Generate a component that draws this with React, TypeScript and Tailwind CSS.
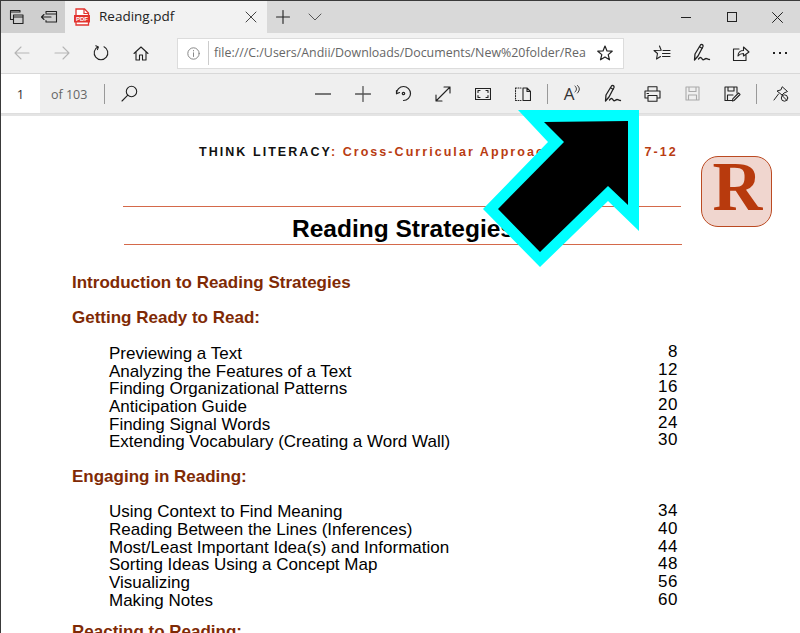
import React from "react";

const S = ({ w = 20, h = 20, vb = "0 0 20 20", c = "#222", sw = 1.3, children }: any) => (
  <svg width={w} height={h} viewBox={vb} fill="none" stroke={c} strokeWidth={sw} strokeLinecap="round" strokeLinejoin="round">{children}</svg>
);

const Sig = ({ c = "#222" }: { c?: string }) => (
  <S c={c}>
    <path d="M3.5 17 L4 11 L9.5 2 C10.5 0.8 12.5 1.8 12 3.5 L7 13 L3.5 17 Z" />
    <path d="M8.5 3.8 L11 5.2" />
    <path d="M7.5 16 C9.5 13.5 10.5 14.5 11.5 16.5 C12.5 17.5 14 15.5 15 15.5 C16 15.5 17 16.5 18.5 16.5" />
  </S>
);

const Icon = ({ w = 40, children }: any) => (
  <div className="flex items-center justify-center shrink-0" style={{ width: w }}>{children}</div>
);

const toc1: [string, string][] = [
  ["Previewing a Text", "8"],
  ["Analyzing the Features of a Text", "12"],
  ["Finding Organizational Patterns", "16"],
  ["Anticipation Guide", "20"],
  ["Finding Signal Words", "24"],
  ["Extending Vocabulary (Creating a Word Wall)", "30"],
];
const toc2: [string, string][] = [
  ["Using Context to Find Meaning", "34"],
  ["Reading Between the Lines (Inferences)", "40"],
  ["Most/Least Important Idea(s) and Information", "44"],
  ["Sorting Ideas Using a Concept Map", "48"],
  ["Visualizing", "56"],
  ["Making Notes", "60"],
];

const Toc = ({ rows, numCls }: { rows: [string, string][]; numCls: string }) => (
  <div className="pl-[37px] pr-[122px] text-[17px] leading-[17.6px] text-black">
    {rows.map(([a, b]) => (
      <div key={a} className="flex justify-between h-[17.65px]">
        <span>{a}</span>
        <span className={`tracking-[0.6px] ${numCls}`}>{b}</span>
      </div>
    ))}
  </div>
);

const Heading = ({ children, cls }: any) => (
  <div className={`text-[17px] leading-[20px] font-bold text-[#7f2a05] ${cls}`}>{children}</div>
);

export default function App() {
  return (
    <div className="relative w-[800px] h-[633px] overflow-hidden bg-white font-['Open_Sans','Noto_Sans',sans-serif] border-t border-l border-[#3a3a3a] flex flex-col">
      {/* Tab strip */}
      <div className="flex h-[32px] shrink-0 bg-[#d9d9d9] items-stretch">
        <div className="flex w-[64px] bg-[#cfcfcf] shrink-0">
          <Icon w={32}>
            <S w={16} h={16} vb="0 0 16 16" sw={1.1}>
              <path d="M1.5 3 V1.5 H11 V3 M1.5 3 H11 M1.5 3 V10.5 H4.5" />
              <path d="M4.5 6 H14 V14.5 H4.5 V6 Z M4.5 8 H14" />
            </S>
          </Icon>
          <Icon w={32}>
            <S w={18} h={14} vb="0 0 18 14" sw={1.1}>
              <path d="M6 3 V1.5 H16.5 V12 H6 V10.5 M1.5 7 H11 M4 4.5 L1.5 7 L4 9.5 M6 4 H16.5" />
            </S>
          </Icon>
        </div>
        <div className="flex items-center w-[202px] bg-[#f2f2f2] shrink-0 pl-[9px]">
          <svg width="16" height="18" viewBox="0 0 16 18">
            <path d="M2 1 H10.5 L14.5 5 V17 H2 Z" fill="#fff" stroke="#e2342f" strokeWidth="1.3" />
            <path d="M10 1 V5.5 H14.5" fill="none" stroke="#e2342f" strokeWidth="1.2" />
            <rect x="0" y="7" width="16" height="7.5" fill="#e2342f" />
            <text x="8" y="13" textAnchor="middle" fontSize="6" fontWeight="700" fill="#fff" fontFamily="Liberation Sans">PDF</text>
          </svg>
          <span className="ml-[9px] text-[13.5px] text-[#222] flex-1 mb-[2px]">Reading.pdf</span>
          <span className="mr-[10px] flex">
            <S w={12} h={12} vb="0 0 12 12" c="#444" sw={1}><path d="M1 1 L11 11 M11 1 L1 11" /></S>
          </span>
        </div>
        <Icon w={32}>
          <S w={14} h={14} vb="0 0 14 14" sw={1.1}><path d="M7 0.5 V13.5 M0.5 7 H13.5" /></S>
        </Icon>
        <Icon w={32}>
          <S w={14} h={8} vb="0 0 14 8" c="#555" sw={1}><path d="M1 1 L7 7 L13 1" /></S>
        </Icon>
        <div className="flex-1" />
        <Icon w={46}><div className="w-[10px] h-px bg-[#222]" /></Icon>
        <Icon w={46}><div className="w-[10px] h-[10px] border border-[#222]" /></Icon>
        <Icon w={45}>
          <S w={11} h={11} vb="0 0 11 11" sw={1}><path d="M0.5 0.5 L10.5 10.5 M10.5 0.5 L0.5 10.5" /></S>
        </Icon>
      </div>

      {/* Address bar */}
      <div className="flex h-[41px] shrink-0 items-center bg-[#f2f2f2] border-b border-[#d8d8d8]">
        <Icon w={41}>
          <S w={16} h={14} vb="0 0 16 14" c="#b5b5b5" sw={1.1}><path d="M15 7 H1 M7 1 L1 7 L7 13" /></S>
        </Icon>
        <Icon w={40}>
          <S w={16} h={14} vb="0 0 16 14" c="#b5b5b5" sw={1.1}><path d="M1 7 H15 M9 1 L15 7 L9 13" /></S>
        </Icon>
        <Icon w={38}>
          <S w={16} h={16} vb="0 0 16 16" sw={1.1}><path d="M5 1.8 A6.8 6.8 0 1 0 11 1.8 M2.8 0.8 L5.4 2 L4.4 4.6" /></S>
        </Icon>
        <Icon w={41}>
          <S w={16} h={15} vb="0 0 16 15" sw={1.1}><path d="M1 7.5 L8 1 L15 7.5 M3 6 V14 H6.5 V9 H9.5 V14 H13 V6" /></S>
        </Icon>
        <div className="flex items-center w-[447px] h-[31px] ml-[16px] bg-white border border-[#dcdcdc] shrink-0">
          <Icon w={30}>
            <S w={13} h={13} vb="0 0 13 13" c="#888" sw={1}>
              <circle cx="6.5" cy="6.5" r="5.7" /><path d="M6.5 5.8 V9.5 M6.5 3.5 V3.9" />
            </S>
          </Icon>
          <div className="w-px h-[24px] bg-[#ccc] shrink-0" />
          <span className="ml-[5px] w-[373px] whitespace-nowrap text-[12.4px] text-[#666] pt-[1px]">file:///C:/Users/Andii/Downloads/Documents/New%20folder/Rea</span>
          <Icon w={36}>
            <S w={16} h={16} vb="0 0 16 16" sw={1.2}><path d="M8 1 L10 6 L15.2 6.2 L11.2 9.6 L12.5 14.8 L8 12 L3.5 14.8 L4.8 9.6 L0.8 6.2 L6 6 Z" /></S>
          </Icon>
        </div>
        <div className="w-[18px] shrink-0" />
        <Icon w={40}>
          <S w={18} h={16} vb="0 0 18 16" sw={1.1}><path d="M6.5 1 L8.2 5.2 L1 5.5 L4.5 8.5 L3.5 14 L7.5 11.5 M10 5.5 H17 M9.5 8.5 H17 M9.5 11.5 H17" /></S>
        </Icon>
        <Icon w={38}><Sig /></Icon>
        <Icon w={41}>
          <S w={18} h={17} vb="0 0 18 17" sw={1.1}><path d="M7 4 H1.5 V15.5 H14 V10 M6 11 C6 7 9 5.5 11.5 5.5 V2 L17 7 L11.5 11 V8.5 C9.5 8.5 7.5 9 6 11 Z" /></S>
        </Icon>
        <div className="flex-1 flex justify-center gap-[4px] pr-[2px]">
          <span className="w-[2px] h-[2px] bg-[#222]" /><span className="w-[2px] h-[2px] bg-[#222]" /><span className="w-[2px] h-[2px] bg-[#222]" />
        </div>
      </div>

      {/* PDF toolbar */}
      <div className="flex h-[39px] shrink-0 items-stretch bg-[#efefef] border-b border-[#dedede] box-content">
        <div className="w-[39px] bg-white flex items-center justify-center text-[13px] text-[#333] shrink-0 pt-[3px]">1</div>
        <span className="ml-[11px] self-center text-[12.5px] text-[#666] w-[53px] shrink-0 pt-[3px]">of 103</span>
        <div className="w-px h-[20px] self-center bg-[#999] shrink-0" />
        <Icon w={48}>
          <S w={17} h={17} vb="0 0 17 17" sw={1.1}><circle cx="10.5" cy="6.5" r="5.2" /><path d="M6.8 10.2 L1 16" /></S>
        </Icon>
        <div className="flex-1" />
        <Icon>
          <div className="w-[16px] h-[2px] bg-[#777]" />
        </Icon>
        <Icon>
          <S w={16} h={16} vb="0 0 16 16" c="#555" sw={1.3}><path d="M8 0.5 V15.5 M0.5 8 H15.5" /></S>
        </Icon>
        <Icon>
          <S w={17} h={17} vb="0 0 17 17" sw={1.2}>
            <path d="M1.5 8.5 A7 7 0 1 1 8.5 15.5 M1.5 5.5 L1.5 8.8 L4.5 7.5" /><circle cx="8.5" cy="8.5" r="1.2" />
          </S>
        </Icon>
        <Icon>
          <S w={16} h={16} vb="0 0 16 16" sw={1.1}><path d="M1 15 L15 1 M9 1 H15 V7 M1 9 V15 H7" /></S>
        </Icon>
        <Icon>
          <S w={16} h={12} vb="0 0 16 12" sw={1.1}>
            <rect x="0.5" y="0.5" width="15" height="11" />
            <path d="M3 4.5 V2.5 H5 M11 2.5 H13 V4.5 M3 7.5 V9.5 H5 M11 9.5 H13 V7.5" />
          </S>
        </Icon>
        <Icon>
          <S w={16} h={14} vb="0 0 16 14" sw={1.1}>
            <path d="M8 1 H12 L15.5 4.5 V13.5 H8 Z M12 1 V4.5 H15.5" />
            <path d="M0.5 1 H6 M0.5 13.5 H6 M0.5 1 V13.5" strokeDasharray="1 1.5" />
          </S>
        </Icon>
        <div className="w-px h-[20px] self-center bg-[#999] shrink-0 mx-[4px]" />
        <Icon>
          <div className="flex items-start leading-none">
            <span className="text-[17px] text-[#333] font-['Open_Sans']">A</span>
            <S w={6} h={10} vb="0 0 6 10" sw={0.9}><path d="M1 1 C3 3 3 5 1 7 M3.5 0.5 C6 3 6 5 3.5 8" /></S>
          </div>
        </Icon>
        <Icon><Sig /></Icon>
        <Icon>
          <S w={17} h={16} vb="0 0 17 16" sw={1.1}>
            <path d="M4 5 V0.8 H13 V5 M4 12 H1 V5 H16 V12 H13 M4 9.5 H13 V15.2 H4 Z M3 7.5 H4.5" />
          </S>
        </Icon>
        <Icon>
          <S w={15} h={15} vb="0 0 15 15" c="#aaa" sw={1.1}>
            <path d="M1 1 H14 V14 H1 Z M4 1 V5.5 H11 V1 M3.5 14 V9 H11.5 V14" />
          </S>
        </Icon>
        <Icon>
          <S w={17} h={16} vb="0 0 17 16" sw={1.1}>
            <path d="M8 14.5 H1 V1 H13 V7 M4 1 V5 H10 V1 M3.5 14.5 V9 H9" /><path d="M10 14.5 L16 8.5 L14.5 7 L8.8 12.8 L8.5 15 Z" />
          </S>
        </Icon>
        <div className="w-px h-[20px] self-center bg-[#999] shrink-0 mx-[4px]" />
        <Icon w={39}>
          <S w={16} h={16} vb="0 0 16 16" sw={1}>
            <path d="M9.5 1 L14.5 5.5 L11 7 L9 9 L4 5 L7.5 4 Z M5.5 8 L1 14" />
            <circle cx="11.5" cy="12" r="3.2" /><path d="M9.3 9.8 L13.7 14.2" />
          </S>
        </Icon>
      </div>

      {/* Document page */}
      <div className="flex-1 min-h-0 overflow-hidden bg-white font-['Liberation_Sans',Arial,sans-serif] border-t-2 border-[#e4e4e4]">
        <div className="relative pl-[71px]">
          <div className="pl-[127px] pt-[26px] text-[12.5px] leading-[20px] font-bold tracking-[2.05px] text-[#111] whitespace-nowrap">
            THINK LITERACY<span className="text-[#b93c12]">: Cross-Curricular Approaches, Grades 7-12</span>
          </div>
          <div className="ml-[51px] mt-[44px] w-[558px] h-px bg-[#d4694a]" />
          <div className="ml-[52px] w-[558px] h-[37px] pt-[7px] flex items-center justify-center text-[24.5px] font-bold text-black">
            <span>Reading Strategies</span>
          </div>
          <div className="ml-[52px] w-[558px] h-px bg-[#d4694a]" />
          <Heading cls="mt-[28px]">Introduction to Reading Strategies</Heading>
          <Heading cls="mt-[15px] mb-[17px]">Getting Ready to Read:</Heading>
          <Toc rows={toc1} numCls="-translate-y-[2px]" />
          <Heading cls="mt-[16px] mb-[16.6px]">Engaging in Reading:</Heading>
          <Toc rows={toc2} numCls="-translate-y-[1px]" />
          <Heading cls="mt-[13px]">Reacting to Reading:</Heading>
          <div className="absolute left-[700px] top-[40px] w-[71px] h-[71px] pb-[8px] pl-[2px] rounded-[17px] bg-[#f0d6cf] border border-[#bb4a22] flex items-center justify-center font-['Liberation_Serif',serif] font-bold text-[69px] leading-none text-[#b83a0d]">
            R
          </div>
        </div>
      </div>

      {/* Annotation arrow */}
      <svg className="absolute left-[-1px] top-[-1px]" width="800" height="633" viewBox="0 0 800 633">
        <polygon points="518,110 639,110 639,231 608,201 540,267 483,209 548,142" fill="#00ffff" />
        <polygon points="544,122 628,121 628,205 608,186 540,252 498,209 564,142" fill="#000" />
      </svg>
    </div>
  );
}
